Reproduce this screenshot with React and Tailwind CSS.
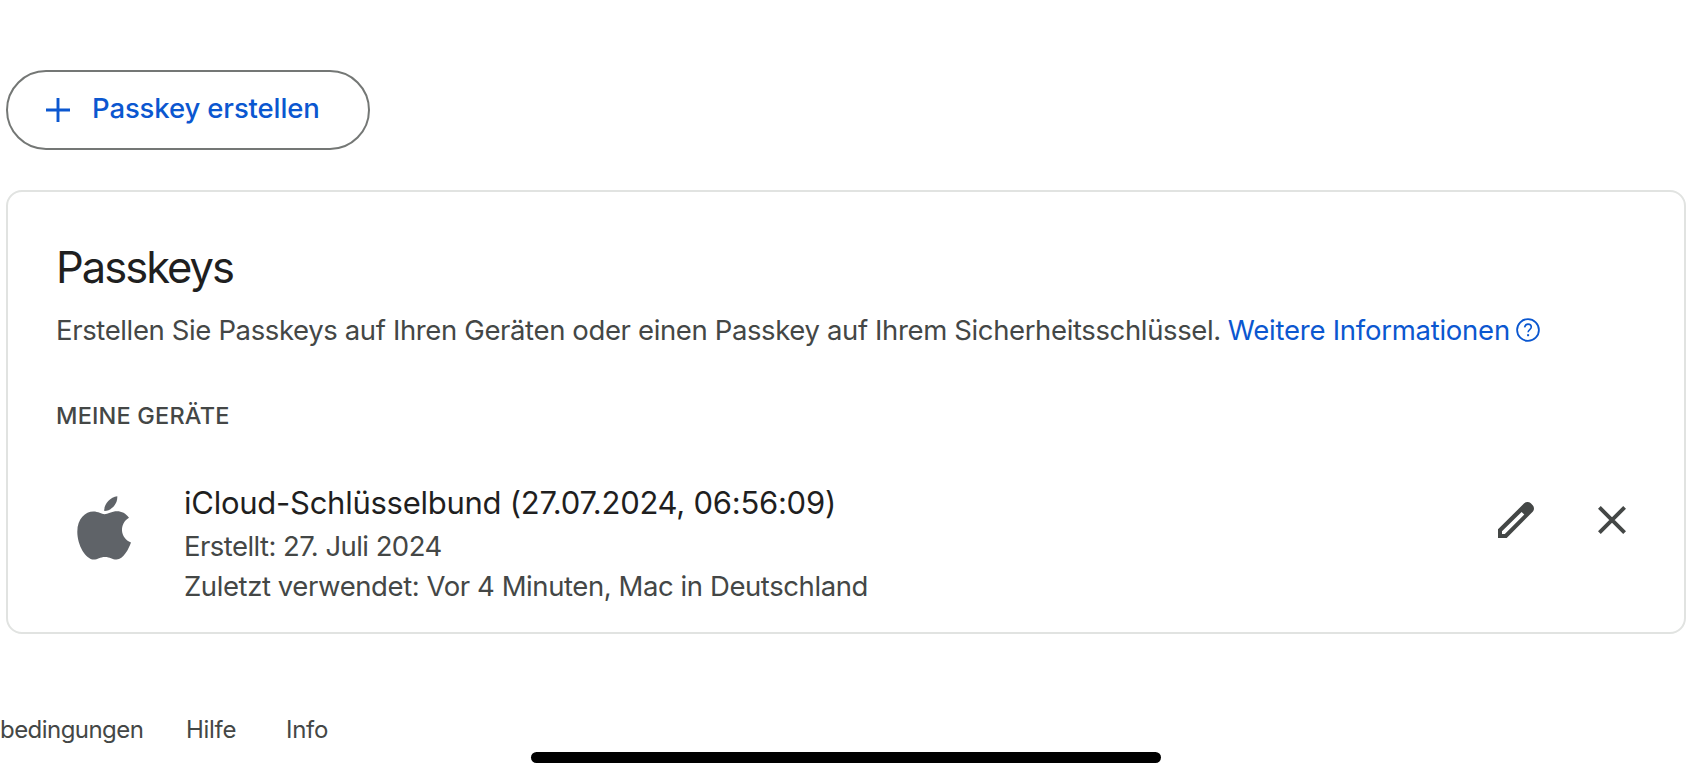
import React from 'react';

const PlusIcon = () => (
    <svg className="h-6 w-6" viewBox="0 0 24 24" fill="none" stroke="currentColor" strokeWidth="2.9">
        <path d="M12 0v24M0 12h24" />
    </svg>
);

const HelpIcon = () => (
    <svg className="h-6 w-6 shrink-0" viewBox="0 0 24 24" fill="none" stroke="currentColor" strokeWidth="1.8">
        <circle cx="12" cy="12" r="10.9" />
        <path d="M8.6 9.3C9 7.3 10.2 6.1 12 6.1c1.9 0 3.3 1.2 3.3 3 0 2.4-3.2 2.7-3.2 5.2" strokeWidth="1.6" />
        <path d="M11.1 16.2h2v2h-2z" fill="currentColor" stroke="none" />
    </svg>
);

const AppleIcon = () => (
    <svg className="ml-[21px] mt-[15px] h-16 w-[54px] shrink-0 text-[#5f6368]" viewBox="0 0 54 64" fill="currentColor">
        <path d="M40.3 .2C40.8 8 34.5 15 27.3 14.9 26.6 8.2 33.3 .8 40.3 .2Z" />
        <path d="M27.5 18.2C30.8 18.2 34.5 15.3 40.2 15.3 44.5 15.3 49 17.4 52 21.8 42 27.5 42.8 42.3 54 46.5 51.7 52.8 46.5 63.5 39.5 63.5 35.2 63.5 33 60.9 28 60.9 22.9 60.9 20.8 63.5 16.8 63.5 8.6 63.5 .3 49 .3 35.7 .3 22.7 8.5 15.5 16.3 15.5 21.3 15.5 24.6 18.2 27.5 18.2Z" />
    </svg>
);

const EditIcon = () => (
    <svg className="h-9 w-9" viewBox="0 0 36 36" fill="currentColor">
        <path
            fillRule="evenodd"
            d="M0 36V27.3L26.2 1.3C28 -.4 31 -.4 32.8 1.3L34.7 3.2C36.4 5 36.4 8 34.7 9.8L8.7 36ZM4 32H6.8L26.3 12.6 23.6 9.9 4 29.2Z"
        />
    </svg>
);

const CloseIcon = () => (
    <svg className="h-7 w-7" viewBox="0 0 28 28" fill="none" stroke="currentColor" strokeWidth="3.9">
        <path d="M1.4 1.4l25.2 25.2M26.6 1.4L1.4 26.6" />
    </svg>
);

const App = () => {
    return (
        <div className="h-[778px] w-[1692px] overflow-hidden bg-white pl-1.5 pt-[70px] font-['Inter',sans-serif] text-[27.5px] text-[#444746]">
            <button className="flex h-20 w-[364px] items-center rounded-full border-2 border-[#747775] pl-[38px] font-medium text-[#0b57d0]">
                <PlusIcon />
                <span className="mb-1 ml-[22px] whitespace-nowrap leading-10 tracking-[-0.12px]">Passkey erstellen</span>
            </button>

            <section className="mt-10 h-[444px] w-[1680px] rounded-2xl border-2 border-[#e1e3e1] pl-12 pr-[58px] pt-[47px]">
                <h2 className="text-[43.5px] leading-[56px] tracking-[-2px] text-[#1f1f1f]">Passkeys</h2>
                <p className="mt-[15px] flex items-center whitespace-nowrap leading-10">
                    <span className="tracking-[-0.37px]">Erstellen Sie Passkeys auf Ihren Geräten oder einen Passkey auf Ihrem Sicherheitsschlüssel.</span>
                    <a className="ml-[7px] flex items-center gap-1.5 text-[#0b57d0]">
                        <span className="tracking-[-0.25px]">Weitere Informationen</span>
                        <HelpIcon />
                    </a>
                </p>
                <h3 className="mt-[50px] text-[23.5px] font-medium leading-8 tracking-[0.18px]">MEINE GERÄTE</h3>

                <div className="mt-[49px] flex">
                    <AppleIcon />
                    <div className="ml-[53px] grow whitespace-nowrap">
                        <div className="mb-px text-[31px] leading-[44px] tracking-[-0.26px] text-[#1f1f1f]">iCloud-Schlüsselbund (27.07.2024, 06:56:09)</div>
                        <div className="leading-10 tracking-[-0.55px]">Erstellt: 27. Juli 2024</div>
                        <div className="leading-10 tracking-[-0.42px]">Zuletzt verwendet: Vor 4 Minuten, Mac in Deutschland</div>
                    </div>
                    <div className="mt-[21px] flex h-9 items-center gap-16">
                        <EditIcon />
                        <CloseIcon />
                    </div>
                </div>
            </section>

            <footer className="mt-20 flex whitespace-nowrap text-[24px] leading-8">
                <span className="-ml-1.5 w-[149px] tracking-[-0.55px]">bedingungen</span>
                <span className="ml-[37px] w-[100px] tracking-[-0.3px]">Hilfe</span>
                <span className="tracking-[-0.3px]">Info</span>
            </footer>
            <div className="ml-[525px] mt-[6px] h-[11px] w-[630px] rounded-full bg-black" />
        </div>
    );
};

export default App;
